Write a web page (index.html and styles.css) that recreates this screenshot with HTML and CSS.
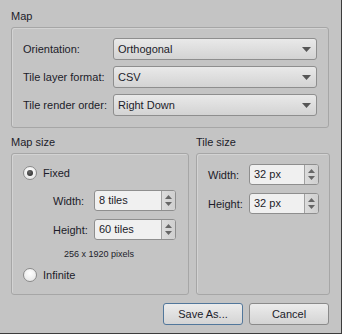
FILE: index.html
```html
<!DOCTYPE html>
<html lang="en">
<head>
    <meta charset="UTF-8">
    <title>New Map</title>
    <link rel="stylesheet" href="styles.css">
</head>
<body>

<div class="dialog">
    <div class="group-title">Map</div>
    <div class="group map-group">
        <div class="form-row">
            <span class="label">Orientation:</span>
            <div class="combo"><span>Orthogonal</span><svg class="combo-arrow" width="9" height="5" viewBox="0 0 9 5"><path d="M0 0H9L4.5 5Z"/></svg></div>
        </div>
        <div class="form-row">
            <span class="label">Tile layer format:</span>
            <div class="combo"><span>CSV</span><svg class="combo-arrow" width="9" height="5" viewBox="0 0 9 5"><path d="M0 0H9L4.5 5Z"/></svg></div>
        </div>
        <div class="form-row">
            <span class="label">Tile render order:</span>
            <div class="combo"><span>Right Down</span><svg class="combo-arrow" width="9" height="5" viewBox="0 0 9 5"><path d="M0 0H9L4.5 5Z"/></svg></div>
        </div>
    </div>

    <div class="columns">
        <div class="col map-size">
            <div class="group-title">Map size</div>
            <div class="group size-group">
                <label class="radio-row">
                    <span class="radio checked"></span>
                    <span>Fixed</span>
                </label>
                <div class="spin-grid">
                    <span class="label">Width:</span>
                    <div class="spinbox wide">
                        <span class="spin-value">8 tiles</span>
                        <div class="spin-buttons">
                            <svg width="7" height="4" viewBox="0 0 7 4"><path d="M0 4H7L3.5 0Z"/></svg>
                            <svg width="7" height="4" viewBox="0 0 7 4"><path d="M0 0H7L3.5 4Z"/></svg>
                        </div>
                    </div>
                    <span class="label">Height:</span>
                    <div class="spinbox wide">
                        <span class="spin-value">60 tiles</span>
                        <div class="spin-buttons">
                            <svg width="7" height="4" viewBox="0 0 7 4"><path d="M0 4H7L3.5 0Z"/></svg>
                            <svg width="7" height="4" viewBox="0 0 7 4"><path d="M0 0H7L3.5 4Z"/></svg>
                        </div>
                    </div>
                </div>
                <div class="pixel-size">256 x 1920 pixels</div>
                <label class="radio-row">
                    <span class="radio"></span>
                    <span>Infinite</span>
                </label>
            </div>
        </div>

        <div class="col tile-size">
            <div class="group-title">Tile size</div>
            <div class="group tile-group">
                <div class="spin-grid">
                    <span class="label">Width:</span>
                    <div class="spinbox">
                        <span class="spin-value">32 px</span>
                        <div class="spin-buttons">
                            <svg width="7" height="4" viewBox="0 0 7 4"><path d="M0 4H7L3.5 0Z"/></svg>
                            <svg width="7" height="4" viewBox="0 0 7 4"><path d="M0 0H7L3.5 4Z"/></svg>
                        </div>
                    </div>
                    <span class="label">Height:</span>
                    <div class="spinbox">
                        <span class="spin-value">32 px</span>
                        <div class="spin-buttons">
                            <svg width="7" height="4" viewBox="0 0 7 4"><path d="M0 4H7L3.5 0Z"/></svg>
                            <svg width="7" height="4" viewBox="0 0 7 4"><path d="M0 0H7L3.5 4Z"/></svg>
                        </div>
                    </div>
                </div>
            </div>
        </div>
    </div>

    <div class="buttons">
        <button class="button default">Save As...</button>
        <button class="button">Cancel</button>
    </div>
</div>

</body>
</html>
```

FILE: styles.css
```css
html, body {
    margin: 0;
    padding: 0;
    background: #c4c4c4;
}

.dialog {
    box-sizing: border-box;
    width: 342px;
    height: 334px;
    padding: 9px 12px 0 11px;
    background: #c4c4c4;
    border-right: 1px solid #3c3c3c;
    border-bottom: 1px solid #3c3c3c;
    font-family: 'Liberation Sans', Arial, sans-serif;
    font-size: 11px;
    color: #1c1c2a;
    display: flex;
    flex-direction: column;
}

.group-title {
    height: 14px;
    line-height: 14px;
    margin-bottom: 4px;
}

.group {
    box-sizing: border-box;
    border: 1px solid #a6a6a6;
    border-radius: 3px;
    box-shadow: inset 1px 1px 0 rgba(255, 255, 255, 0.25);
}

.map-group {
    height: 101px;
    padding: 10px 11px;
    display: flex;
    flex-direction: column;
    gap: 6px;
}

.form-row {
    display: flex;
    align-items: center;
}

.form-row .label {
    width: 90px;
}

.combo {
    box-sizing: border-box;
    width: 204px;
    height: 22px;
    padding: 0 5px 0 4px;
    border: 1px solid #8e8e8e;
    border-radius: 3px;
    background: linear-gradient(#e9e9e9, #d3d3d3);
    display: flex;
    align-items: center;
    justify-content: space-between;
}

.combo-arrow {
    fill: #555;
}

.columns {
    margin-top: 7px;
    display: flex;
    gap: 7px;
}

.map-size {
    width: 178px;
}

.tile-size {
    width: 134px;
}

.size-group,
.tile-group {
    height: 142px;
}

.size-group {
    padding: 12px 12px 0 11px;
}

.tile-group {
    padding: 10px 11px 0 11px;
}

.radio-row {
    display: flex;
    align-items: center;
    gap: 6px;
    height: 14px;
}

.radio {
    box-sizing: border-box;
    width: 14px;
    height: 14px;
    border: 1px solid #8a8a8a;
    border-radius: 50%;
    background: radial-gradient(circle at 50% 35%, #ffffff, #e2e2e2);
    display: flex;
    align-items: center;
    justify-content: center;
}

.radio.checked::after {
    content: '';
    width: 6px;
    height: 6px;
    border-radius: 50%;
    background: radial-gradient(circle at 40% 35%, #6a6a6a, #222);
}

.spin-grid {
    display: grid;
    grid-template-columns: 41px auto;
    align-items: center;
    row-gap: 8px;
}

.size-group .spin-grid {
    margin: 10px 0 0 30px;
}

.spinbox {
    box-sizing: border-box;
    width: 70px;
    height: 21px;
    border: 1px solid #8e8e8e;
    border-radius: 3px;
    background: #f0f0f0;
    display: flex;
    overflow: hidden;
}

.spinbox.wide {
    width: 82px;
}

.spin-value {
    flex: 1;
    padding-left: 4px;
    line-height: 19px;
}

.spin-buttons {
    width: 13px;
    border-left: 1px solid #a0a0a0;
    background: linear-gradient(to right, #dcdcdc, #cfcfcf);
    display: flex;
    flex-direction: column;
    justify-content: space-around;
    align-items: center;
    padding: 2px 0;
}

.spin-buttons svg {
    fill: #666;
}

.pixel-size {
    margin: 8px 0 0 41px;
    font-size: 9px;
    line-height: 12px;
}

.size-group .radio-row:last-child {
    margin-top: 8px;
}

.buttons {
    margin-top: 8px;
    display: flex;
    justify-content: flex-end;
    gap: 6px;
}

.button {
    box-sizing: border-box;
    width: 80px;
    height: 22px;
    padding: 0;
    border: 1px solid #8a8a8a;
    border-radius: 3px;
    background: linear-gradient(#ececec, #d4d4d4);
    font-family: 'Liberation Sans', Arial, sans-serif;
    font-size: 11px;
    color: #1c1c2a;
}

.button.default {
    border-color: #52779b;
}
```
